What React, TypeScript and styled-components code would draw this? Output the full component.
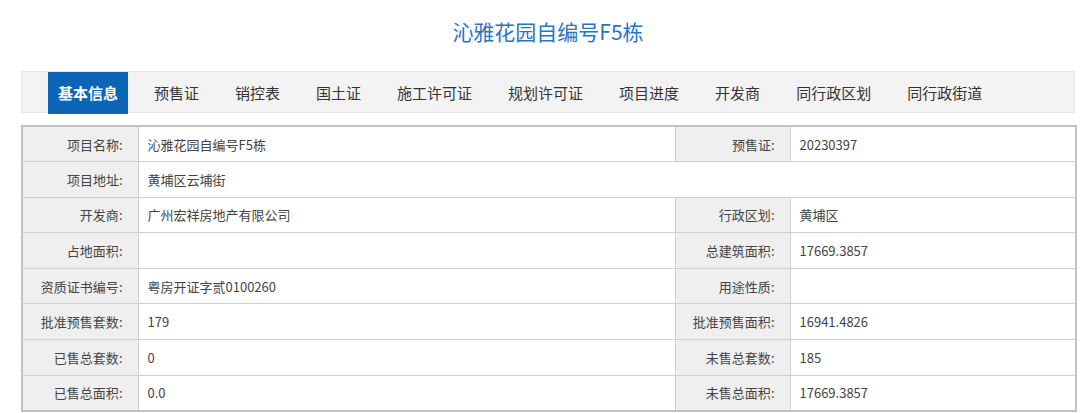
import styled, { createGlobalStyle } from 'styled-components';

const GlobalStyle = createGlobalStyle`
  body {
    margin: 0;
    background: #fff;
    font-family: "Noto Sans CJK SC", "Noto Sans", sans-serif;
  }
`;

const Page = styled.div`
  width: 1054px;
  padding-left: 21px;
`;

const Title = styled.h1`
  margin: 0 0 9px;
  height: 62px;
  line-height: 62px;
  text-align: center;
  font-size: 21px;
  font-weight: 400;
  color: #2a74c4;
`;

const Nav = styled.ul`
  display: flex;
  gap: 16px;
  margin: 0;
  padding: 0 0 0 26px;
  list-style: none;
  height: 42px;
  background: #f3f3f3;
  border: 1px solid #e6e6e6;
  box-sizing: border-box;
`;

const Tab = styled.li<{ $active?: boolean }>`
  padding: 0 10px;
  height: 42px;
  line-height: 42px;
  font-size: 15px;
  color: ${(p) => (p.$active ? '#fff' : '#333')};
  font-weight: ${(p) => (p.$active ? 700 : 400)};
  background: ${(p) => (p.$active ? '#0b64b6' : 'transparent')};
  cursor: pointer;
`;

const Table = styled.table`
  margin-top: 12px;
  width: 1054px;
  border-collapse: collapse;
  border: 2px solid #c2c2c2;
  table-layout: fixed;
  font-size: 13px;
`;

const Row = styled.tr`
  height: 35.6px;
`;

const Label = styled.td`
  background: #efefef;
  border: 1px solid #cfcfcf;
  text-align: right;
  padding: 0 15px 0 0;
  color: #444;
`;

const Value = styled.td`
  background: #fff;
  border: 1px solid #cfcfcf;
  padding: 0 0 0 9px;
  color: #444;
`;

const tabs = [
  '基本信息',
  '预售证',
  '销控表',
  '国土证',
  '施工许可证',
  '规划许可证',
  '项目进度',
  '开发商',
  '同行政区划',
  '同行政街道',
];

const rows: [string, string, string, string][] = [
  ['开发商', '广州宏祥房地产有限公司', '行政区划', '黄埔区'],
  ['占地面积', '', '总建筑面积', '17669.3857'],
  ['资质证书编号', '粤房开证字贰0100260', '用途性质', ''],
  ['批准预售套数', '179', '批准预售面积', '16941.4826'],
  ['已售总套数', '0', '未售总套数', '185'],
  ['已售总面积', '0.0', '未售总面积', '17669.3857'],
];

const App = () => {
  return (
    <Page>
      <GlobalStyle />
      <Title>沁雅花园自编号F5栋</Title>
      <Nav>
        {tabs.map((t, i) => (
          <Tab key={t} $active={i === 0}>
            {t}
          </Tab>
        ))}
      </Nav>
      <Table>
        <colgroup>
          <col style={{ width: 116 }} />
          <col style={{ width: 537 }} />
          <col style={{ width: 115 }} />
          <col style={{ width: 286 }} />
        </colgroup>
        <tbody>
          <Row>
            <Label>项目名称:</Label>
            <Value>沁雅花园自编号F5栋</Value>
            <Label>预售证:</Label>
            <Value>20230397</Value>
          </Row>
          <Row>
            <Label>项目地址:</Label>
            <Value colSpan={3}>黄埔区云埔街</Value>
          </Row>
          {rows.map(([l1, v1, l2, v2]) => (
            <Row key={l1}>
              <Label>{l1}:</Label>
              <Value>{v1}</Value>
              <Label>{l2}:</Label>
              <Value>{v2}</Value>
            </Row>
          ))}
        </tbody>
      </Table>
    </Page>
  );
};

export default App;
